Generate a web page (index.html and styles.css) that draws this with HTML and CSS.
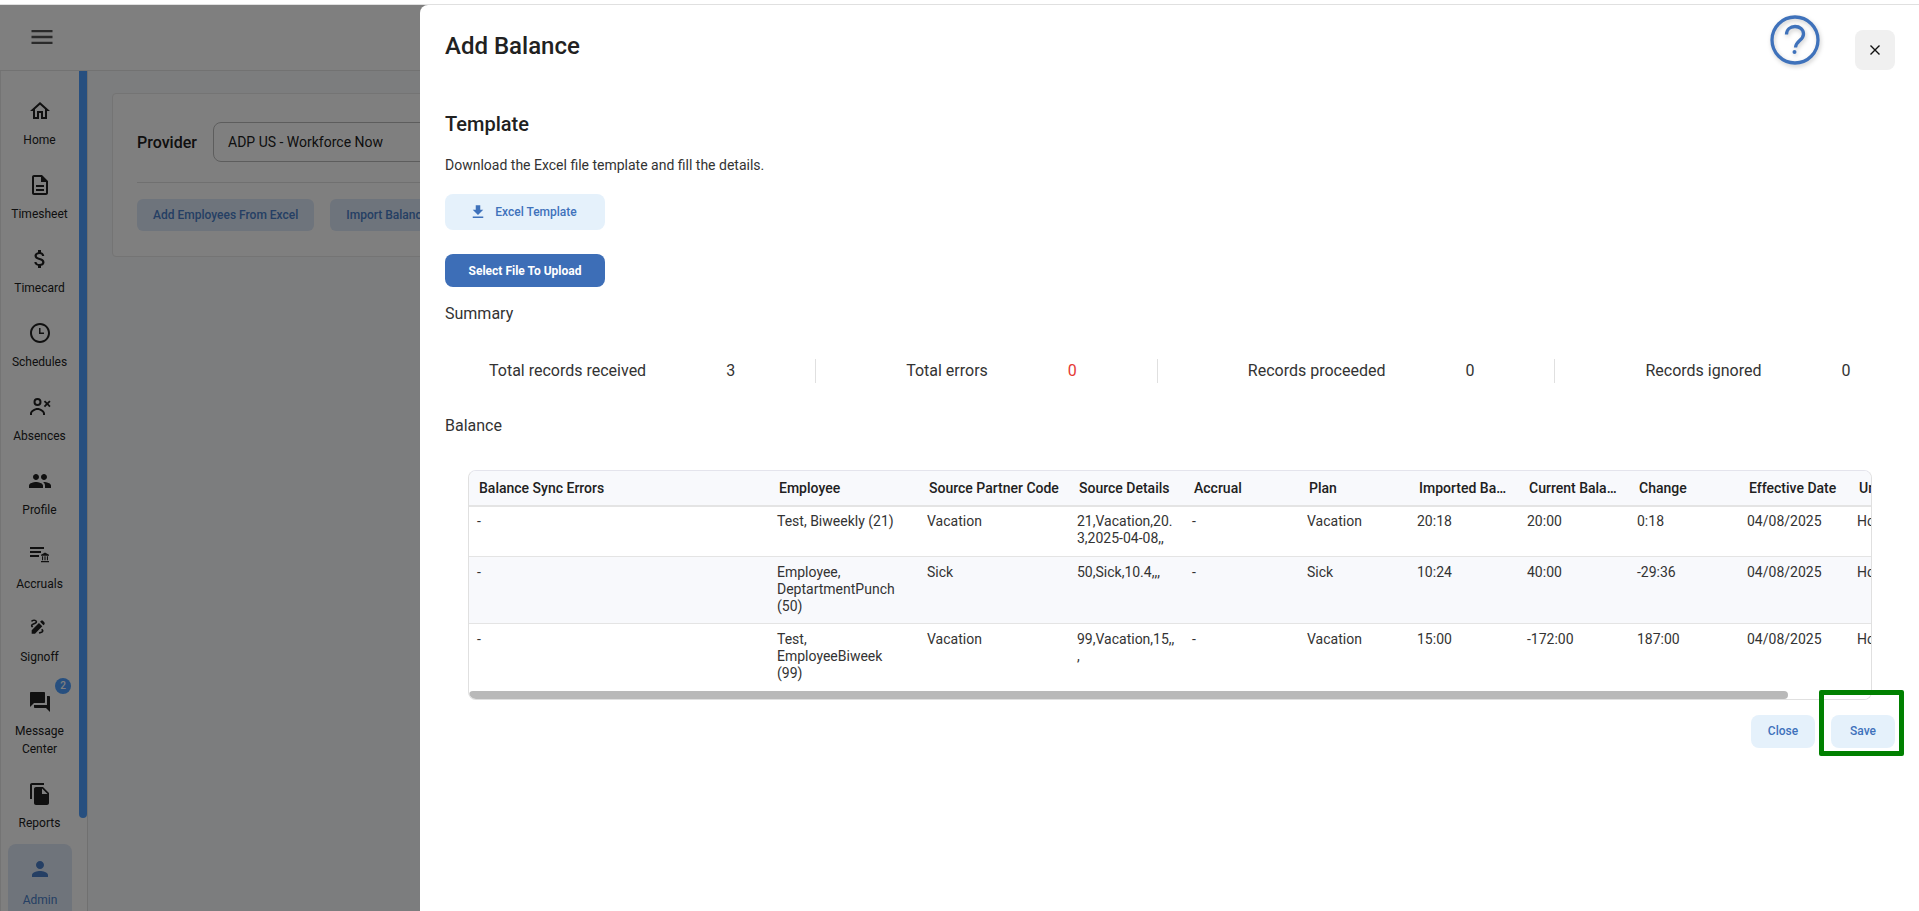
FILE: index.html
```html
<!DOCTYPE html>
<html lang="en">
<head>
  <meta charset="UTF-8" />
  <title>Add Balance</title>
  <link rel="stylesheet" href="styles.css">
</head>
<body>
  <div class="screen">
    <div class="app">
      <header class="topbar">
        <svg class="menu-icon" viewBox="0 0 24 24"><path d="M3 18h18v-2H3v2zm0-5h18v-2H3v2zm0-7v2h18V6H3z"/></svg>
      </header>
      <div class="app-body">
        <nav class="sidebar">
          <a class="nav-item">
            <svg viewBox="0 0 24 24"><path d="M12 5.69l5 4.5V18h-2v-6H9v6H7v-7.81l5-4.5M12 3L2 12h3v8h6v-6h2v6h6v-8h3L12 3z"/></svg>
            <span>Home</span>
          </a>
          <a class="nav-item">
            <svg viewBox="0 0 24 24"><path d="M8 16h8v2H8zm0-4h8v2H8zm6-10H6c-1.1 0-2 .9-2 2v16c0 1.1.89 2 1.99 2H18c1.1 0 2-.9 2-2V8l-6-6zm4 18H6V4h7v5h5v11z"/></svg>
            <span>Timesheet</span>
          </a>
          <a class="nav-item">
            <svg viewBox="0 0 24 24"><path d="M11.8 10.9c-2.27-.59-3-1.2-3-2.15 0-1.09 1.01-1.85 2.7-1.85 1.78 0 2.44.85 2.5 2.1h2.21c-.07-1.72-1.12-3.3-3.21-3.81V3h-3v2.16c-1.94.42-3.5 1.68-3.5 3.61 0 2.31 1.91 3.46 4.7 4.13 2.5.6 3 1.48 3 2.41 0 .69-.49 1.79-2.7 1.79-2.06 0-2.87-.92-2.98-2.1h-2.2c.12 2.19 1.76 3.42 3.68 3.83V21h3v-2.15c1.95-.37 3.5-1.5 3.5-3.55 0-2.84-2.43-3.81-4.7-4.4z"/></svg>
            <span>Timecard</span>
          </a>
          <a class="nav-item">
            <svg viewBox="0 0 24 24"><path d="M11.99 2C6.47 2 2 6.48 2 12s4.47 10 9.99 10C17.52 22 22 17.52 22 12S17.52 2 11.99 2zM12 20c-4.42 0-8-3.58-8-8s3.58-8 8-8 8 3.58 8 8-3.58 8-8 8z"/><path d="M12.5 7H11v6h5v-1.5h-3.5z"/></svg>
            <span>Schedules</span>
          </a>
          <a class="nav-item">
            <svg viewBox="0 0 24 24"><path d="M9.5 5a2 2 0 110 4 2 2 0 010-4zm0-2a4 4 0 100 8 4 4 0 000-8zM2 20v-1.5C2 15.6 6.5 13 9.5 13s7.500 2.600 7.500 5.500V20h-2v-1.500c0-1.500-3.200-3.500-5.500-3.500S4 17 4 18.500V20H2z"/><path d="M22.600 6.700l-2.100 2.100 2.100 2.100-1.300 1.300-2.100-2.100-2.100 2.100-1.300-1.300 2.100-2.100-2.100-2.100 1.300-1.300 2.100 2.100 2.100-2.100z"/></svg>
            <span>Absences</span>
          </a>
          <a class="nav-item">
            <svg viewBox="0 0 24 24"><path d="M16 11c1.660 0 2.990-1.340 2.990-3S17.660 5 16 5c-1.660 0-3 1.340-3 3s1.340 3 3 3zm-8 0c1.660 0 2.990-1.340 2.990-3S9.660 5 8 5C6.340 5 5 6.340 5 8s1.340 3 3 3zm0 2c-2.330 0-7 1.170-7 3.500V19h14v-2.500c0-2.330-4.670-3.500-7-3.500zm8 0c-.29 0-.62.02-.97.05 1.160.84 1.970 1.970 1.970 3.450V19h6v-2.500c0-2.330-4.670-3.500-7-3.500z"/></svg>
            <span>Profile</span>
          </a>
          <a class="nav-item">
            <svg viewBox="0 0 24 24"><path d="M2 4h14v2H2zM2 8h11v2H2zM2 12h9v2H2zM17 9.500l4 2.300v1h-8v-1zM14 13.300h1.100v3.900H14zM16.450 13.300h1.100v3.900h-1.100zM18.900 13.300H20v3.900h-1.100zM13 18h8v1.200h-8z"/></svg>
            <span>Accruals</span>
          </a>
          <a class="nav-item before-message">
            <svg class="signoff-icon" viewBox="0 0 24 24"><path d="M18.850 10.390l1.060-1.060c.78-.78.78-2.050 0-2.830L18.500 5.090c-.78-.78-2.050-.78-2.830 0l-1.060 1.060 4.240 4.240zm-5.660-2.830L4 16.760V21h4.240l9.190-9.190-4.240-4.250zM19 17.500c0 2.190-2.540 3.500-5 3.500-.55 0-1-.45-1-1s.45-1 1-1c1.540 0 3-.73 3-1.500 0-.47-.48-.87-1.230-1.200l1.480-1.480c1.070.63 1.750 1.470 1.750 2.680zM4.580 13.350C3.610 12.790 3 12.060 3 11c0-1.800 1.890-2.630 3.560-3.360C7.590 7.180 9 6.560 9 6c0-.41-.78-1-2-1-1.260 0-1.800.61-1.830.64-.35.41-.98.46-1.400.12-.41-.34-.49-.95-.15-1.380C3.730 4.240 4.760 3 7 3s4 1.320 4 3c0 1.870-1.930 2.720-3.640 3.470C6.420 9.880 5 10.500 5 11c0 .31.43.6 1.070.86l-1.490 1.490z"/></svg>
            <span>Signoff</span>
          </a>
          <a class="nav-item">
            <svg viewBox="0 0 24 24"><path d="M21 6h-2v9H6v2c0 .55.45 1 1 1h11l4 4V7c0-.55-.45-1-1-1zm-4 6V3c0-.55-.45-1-1-1H3c-.55 0-1 .45-1 1v14l4-4h10c.55 0 1-.45 1-1z"/></svg>
            <b class="badge">2</b>
            <span>Message Center</span>
          </a>
          <a class="nav-item">
            <svg viewBox="0 0 24 24"><path d="M16 1H4c-1.100 0-2 .9-2 2v14h2V3h12V1zm-1 4l6 6v10c0 1.100-.9 2-2 2H7.990C6.890 23 6 22.100 6 21l.01-14c0-1.100.89-2 1.990-2h7zm-1 7h5.500L14 6.500V12z"/></svg>
            <span>Reports</span>
          </a>
          <a class="nav-item active">
            <svg viewBox="0 0 24 24"><path d="M12 12c2.210 0 4-1.790 4-4s-1.790-4-4-4-4 1.790-4 4 1.790 4 4 4zm0 2c-2.670 0-8 1.340-8 4v2h16v-2c0-2.660-5.330-4-8-4z"/></svg>
            <span>Admin</span>
          </a>
          <div class="side-thumb"></div>
        </nav>
        <main class="content">
          <section class="card">
            <div class="provider-row">
              <label class="provider-label">Provider</label>
              <div class="provider-select">ADP US - Workforce Now</div>
            </div>
            <div class="card-actions">
              <button class="soft-btn" type="button">Add Employees From Excel</button>
              <button class="soft-btn" type="button">Import Balance From Excel</button>
            </div>
          </section>
        </main>
      </div>
    </div>

    <div class="backdrop"></div>

    <aside class="drawer">
      <div class="drawer-head">
        <h1>Add Balance</h1>
        <svg class="help-icon" viewBox="0 0 50 50">
          <circle cx="25" cy="25" r="23" />
          <path d="M16.500 19.500c0-5 3.800-8 8.500-8s8.500 3 8.500 7.500c0 6.500-7.500 6.500-8 13.500" />
          <circle class="help-dot" cx="24.500" cy="37" r="2" />
        </svg>
        <button class="close-btn" type="button">
          <svg viewBox="0 0 10 10"><path d="M.5.5l9 9M9.500.5l-9 9"/></svg>
        </button>
      </div>

      <h2>Template</h2>
      <p class="hint">Download the Excel file template and fill the details.</p>
      <button class="template-btn" type="button">
        <svg viewBox="0 0 24 24"><path d="M19 9h-4V3H9v6H5l7 7 7-7zM5 18v2h14v-2H5z"/></svg>
        Excel Template
      </button>
      <button class="upload-btn" type="button">Select File To Upload</button>

      <div class="section-title summary-title">Summary</div>
      <div class="stats">
        <div class="stat"><span>Total records received</span><span class="stat-value">3</span></div>
        <div class="stat"><span>Total errors</span><span class="stat-value red">0</span></div>
        <div class="stat"><span>Records proceeded</span><span class="stat-value">0</span></div>
        <div class="stat"><span>Records ignored</span><span class="stat-value">0</span></div>
      </div>

      <div class="section-title balance-title">Balance</div>
      <div class="grid-wrap">
        <table class="grid">
          <colgroup>
            <col class="w300"><col class="w150"><col class="w150"><col class="w115"><col class="w115">
            <col class="w110"><col class="w110"><col class="w110"><col class="w110"><col class="w110"><col class="w110">
          </colgroup>
          <thead>
            <tr>
              <th>Balance Sync Errors</th><th>Employee</th><th>Source Partner Code</th><th>Source Details</th><th>Accrual</th>
              <th>Plan</th><th>Imported Balance</th><th>Current Balance</th><th>Change</th><th>Effective Date</th><th>Unit</th>
            </tr>
          </thead>
          <tbody>
            <tr class="row-short">
              <td>-</td><td>Test, Biweekly (21)</td><td>Vacation</td><td>21,Vacation,20.3,2025-04-08,,</td><td>-</td>
              <td>Vacation</td><td>20:18</td><td>20:00</td><td>0:18</td><td>04/08/2025</td><td>Hours</td>
            </tr>
            <tr class="row-tall alt">
              <td>-</td><td>Employee, DeptartmentPunch (50)</td><td>Sick</td><td>50,Sick,10.4,,,</td><td>-</td>
              <td>Sick</td><td>10:24</td><td>40:00</td><td>-29:36</td><td>04/08/2025</td><td>Hours</td>
            </tr>
            <tr class="row-tall">
              <td>-</td><td>Test, EmployeeBiweek (99)</td><td>Vacation</td><td>99,Vacation,15,,,</td><td>-</td>
              <td>Vacation</td><td>15:00</td><td>-172:00</td><td>187:00</td><td>04/08/2025</td><td>Hours</td>
            </tr>
          </tbody>
        </table>
        <div class="grid-scroll"><div class="grid-thumb"></div></div>
      </div>

      <div class="drawer-actions">
        <button class="action-btn" type="button">Close</button>
        <button class="action-btn" type="button">Save</button>
      </div>
      <div class="highlight"></div>
    </aside>
  </div>
</body>
</html>
```

FILE: styles.css
```css
* {
  box-sizing: border-box;
}
html, body {
  margin: 0;
  height: 100%;
  overflow: hidden;
  background: #fff;
}
body {
  font-family: Roboto, "Liberation Sans", sans-serif;
  color: #212121;
}
button {
  font-family: inherit;
  border: none;
  cursor: pointer;
}

/* page behind the drawer */
.screen {
  position: relative;
  height: 907px;
  margin-top: 4px;
  border-top: 1px solid #e0e0e0;
  overflow: hidden;
}
.app {
  height: 100%;
  display: flex;
  flex-direction: column;
}
.topbar {
  flex: 0 0 66px;
  display: flex;
  align-items: center;
  padding-left: 28px;
  padding-bottom: 1px;
  background: #fff;
  border-bottom: 1px solid #e4e4e4;
}
.menu-icon {
  width: 28px;
  height: 28px;
  fill: #555;
}
.app-body {
  flex: 1;
  display: flex;
  min-height: 0;
}
.sidebar {
  position: relative;
  flex: 0 0 88px;
  padding: 4px 9px 0 0;
  background: #fff;
  border-left: 1px solid #e8e8e8;
  border-right: 1px solid #e0e0e0;
  overflow: hidden;
}
.nav-item {
  position: relative;
  display: flex;
  flex-direction: column;
  align-items: center;
  padding-top: 24px;
  min-height: 74px;
  font-size: 12px;
  line-height: 18px;
  text-align: center;
  color: #212121;
}
.nav-item svg {
  width: 24px;
  height: 24px;
  margin-bottom: 8px;
  fill: #212121;
}
.nav-item span {
  display: block;
  width: 70px;
}
.nav-item .signoff-icon {
  width: 20px;
  height: 20px;
  margin: 0 4px 12px 0;
}
.nav-item.before-message {
  height: 73px;
  min-height: 0;
}
.nav-item.active {
  width: 64px;
  margin: 12px 0 0 7px;
  padding-top: 13px;
  background: #dfe8f6;
  border-radius: 8px;
  color: #4a7fc8;
}
.nav-item.active svg {
  margin-bottom: 10px;
  fill: #4a7fc8;
}
.badge {
  position: absolute;
  top: 12px;
  right: 7px;
  width: 16px;
  height: 16px;
  border-radius: 50%;
  background: #4e9ffe;
  color: #fff;
  font-size: 10px;
  line-height: 16px;
  font-weight: 500;
}
.side-thumb {
  position: absolute;
  top: 0;
  left: 78px;
  width: 8px;
  height: 747px;
  background: #4e9ffe;
  border-radius: 0 0 5px 5px;
}
.content {
  flex: 1;
  padding: 22px 24px;
  background: #f9fafc;
}
.card {
  padding: 28px 24px 25px;
  background: #fff;
  border: 1px solid #e8e8e8;
  border-radius: 4px;
}
.provider-row {
  display: flex;
  align-items: center;
  padding-bottom: 20px;
  border-bottom: 1px solid #e0e0e0;
}
.provider-label {
  width: 76px;
  font-size: 16px;
  font-weight: 500;
}
.provider-select {
  width: 500px;
  height: 40px;
  padding-left: 14px;
  font-size: 14px;
  line-height: 38px;
  border: 1px solid #bbb;
  border-radius: 8px;
}
.card-actions {
  display: flex;
  gap: 16px;
  margin-top: 16px;
}
.soft-btn {
  height: 32px;
  padding: 0 16px;
  background: #dde8f8;
  color: #4a7fc8;
  font-size: 12px;
  font-weight: 500;
  border-radius: 6px;
}
.backdrop {
  position: absolute;
  inset: 0;
  background: rgba(0, 0, 0, 0.5);
}

/* drawer */
.drawer {
  position: absolute;
  top: 0;
  right: 0;
  bottom: 0;
  left: 420px;
  padding-top: 25px;
  background: #fff;
  border-radius: 8px 0 0 0;
}
.drawer-head {
  display: flex;
  align-items: flex-start;
  padding: 0 24px 0 25px;
}
.drawer-head h1 {
  flex: 1;
  margin: 1px 0 0;
  font-size: 24px;
  line-height: 30px;
  font-weight: 500;
}
.help-icon {
  width: 50px;
  height: 50px;
  margin: -15px 35px 0 0;
  fill: none;
  stroke: #3f72bb;
  stroke-width: 3.3;
  filter: drop-shadow(1px 2px 2px rgba(0, 0, 0, 0.2));
}
.help-icon .help-dot {
  fill: #3f72bb;
  stroke: none;
}
.close-btn {
  display: flex;
  align-items: center;
  justify-content: center;
  width: 40px;
  height: 40px;
  padding: 0;
  background: #f0f0f0;
  border-radius: 8px;
}
.close-btn svg {
  width: 10px;
  height: 10px;
  fill: none;
  stroke: #111;
  stroke-width: 1.4;
}
.drawer h2 {
  margin: 42px 0 0 25px;
  font-size: 20px;
  line-height: 24px;
  font-weight: 500;
}
.hint {
  margin: 19px 0 0 25px;
  font-size: 14px;
  line-height: 20px;
  color: #333;
}
.template-btn,
.upload-btn {
  display: flex;
  align-items: center;
  justify-content: center;
  width: 160px;
  margin-left: 25px;
  font-size: 12px;
  font-weight: 500;
  border-radius: 8px;
}
.template-btn {
  height: 36px;
  margin-top: 19px;
  padding: 0 4px 0 0;
  gap: 8px;
  background: #e5f1fb;
  color: #3f72bb;
}
.template-btn svg {
  width: 18px;
  height: 18px;
  fill: #3f72bb;
}
.upload-btn {
  height: 33px;
  margin-top: 24px;
  background: #3d6eb7;
  color: #fff;
  font-weight: 700;
}
.section-title {
  margin-left: 25px;
  font-size: 16px;
  line-height: 24px;
  color: #333;
}
.summary-title {
  margin-top: 15px;
}
.stats {
  display: flex;
  margin-top: 33px;
  font-size: 16px;
  line-height: 24px;
  white-space: nowrap;
  color: #333;
}
.stat {
  display: flex;
  gap: 80px;
  padding: 0 80px 0 90px;
  border-right: 1px solid #e0e0e0;
}
.stat:first-child {
  padding-left: 69px;
}
.stat:last-child {
  border-right: none;
}
.stat-value.red {
  color: #e53935;
}
.balance-title {
  margin-top: 31px;
}
.grid-wrap {
  width: 1404px;
  margin: 32px 0 0 48px;
  background: #fff;
  border: 1px solid #e0e0e0;
  border-top-color: #e4e4ec;
  border-radius: 8px;
  overflow: hidden;
}
.grid {
  width: 1390px;
  table-layout: fixed;
  border-collapse: separate;
  border-spacing: 0;
  font-size: 14px;
  line-height: 17px;
}
.w300 { width: 300px; }
.w150 { width: 150px; }
.w115 { width: 115px; }
.w110 { width: 110px; }
.grid th {
  height: 36px;
  padding: 0 10px;
  text-align: left;
  font-weight: 500;
  white-space: nowrap;
  overflow: hidden;
  text-overflow: ellipsis;
  background: #f8f9fc;
  border-bottom: 2px solid #e4e4e4;
}
.grid td {
  padding: 6px 8px 0;
  vertical-align: top;
  overflow-wrap: anywhere;
  color: #333;
  border-bottom: 1px solid #e4e4e4;
}
.row-short {
  height: 50px;
}
.row-tall {
  height: 67px;
}
.grid .row-tall td {
  padding-top: 7px;
}
.grid tbody tr:last-child td {
  border-bottom: none;
}
.grid .alt td {
  background: #f8f9fc;
}
.grid-scroll {
  height: 8px;
  background: #fff;
}
.grid-thumb {
  width: 1319px;
  height: 8px;
  background: #b9b9b9;
  border-radius: 4px;
}
.drawer-actions {
  display: flex;
  justify-content: flex-end;
  gap: 16px;
  margin-top: 15px;
  padding-right: 24px;
}
.action-btn {
  width: 64px;
  height: 33px;
  padding: 0 0 2px;
  background: #e5f1fb;
  color: #3f72bb;
  font-size: 12px;
  font-weight: 500;
  border-radius: 8px;
}
.highlight {
  position: absolute;
  top: 685px;
  left: 1399px;
  width: 85px;
  height: 66px;
  border: 5px solid #008000;
  border-radius: 2px;
}
```
